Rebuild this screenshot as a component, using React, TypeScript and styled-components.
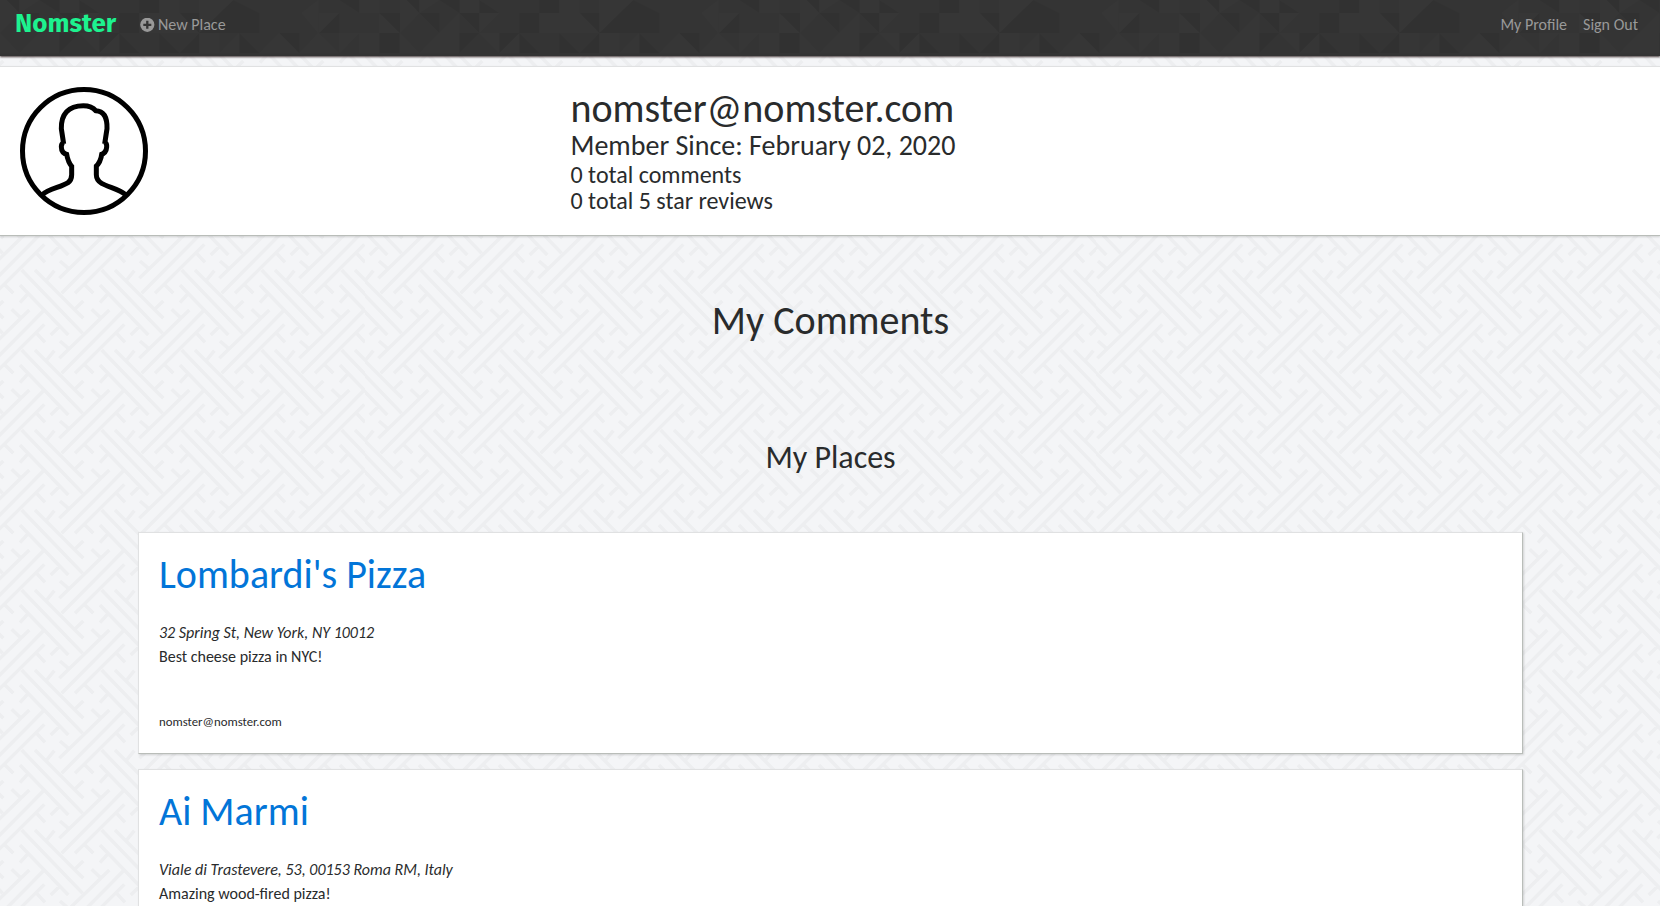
import React from 'react';
import styled, { createGlobalStyle } from 'styled-components';

const svgUrl = (svg: string) => `url("data:image/svg+xml,${encodeURIComponent(svg)}")`;

/* Interlocking diagonal strokes, one 240-unit tile repeated with its neighbours. */
const tileStrokes = [
  'M60 135L205 285M65 90L248 280M105 90L250 235',
  'M85 160L60 188M180 258L152 285M140 120L163 92M225 207L250 183',
  'M178 115L328 -30M185 160L370 -27M225 160L373 13',
  'M205 85L180 63M300 -8L275 -32M350 40L375 67M255 135L280 160',
].join('');

const shifts = [-240, 0, 240];
const pageTile = svgUrl(
  `<svg xmlns="http://www.w3.org/2000/svg" width="80" height="80" viewBox="0 0 240 240"><g fill="none" stroke="#edeef0" stroke-width="10.5">${shifts
    .flatMap((x) => shifts.map((y) => `<path transform="translate(${x} ${y})" d="${tileStrokes}"/>`))
    .join('')}</g></svg>`,
);

const lightFacets =
  'M0 0H20L58 39H0ZM58 39V0H118ZM180 0H238V39H180ZM118 99L178 39V99ZM0 39H58L0 99ZM238 39L298 39L238 99ZM0 99L58 160H0ZM58 160L118 99V160ZM118 99H178V160H118ZM238 99H298V160ZM298 160L358 99V160ZM478 0H538V39H478ZM598 0H700L598 99ZM418 39H538L598 99H418ZM598 99H658V160H598ZM658 160L718 99V160ZM778 160L838 99L898 160ZM905 39L955 0V99ZM958 39H1018L958 99ZM898 160L955 99L1018 160ZM1018 99H1078L1018 160ZM1078 99H1138V160H1078ZM1078 0H1138V39H1078ZM1138 39L1198 99H1138Z';
const darkFacets =
  'M20 0H58V39ZM118 0H178V39ZM238 0L298 39H238ZM58 39H118V99ZM178 39H238V99ZM358 39H418V99H358ZM178 99H238L178 160ZM298 99H358L298 160ZM418 0H478V39H418ZM540 39H598V99ZM700 0L778 39V99H598ZM478 99L538 160H478ZM538 160L598 99V160ZM718 99L778 160H718ZM838 99H898V160ZM1018 39V99H958ZM1018 0H1078V39ZM1138 99H1198V160H1138ZM1138 39H1200V99ZM358 99L418 160H358Z';
const navTile = svgUrl(
  `<svg xmlns="http://www.w3.org/2000/svg" width="400" height="56" viewBox="0 0 1200 168"><rect width="1200" height="168" fill="#343434"/><path fill="#363636" d="${lightFacets}"/><path fill="#313131" d="${darkFacets}"/></svg>`,
);

const GlobalStyle = createGlobalStyle`
  *, *::before, *::after { box-sizing: border-box; }
  html { height: 100%; overflow: hidden; }
  body {
    margin: 0;
    height: 906px;
    overflow: hidden;
    font-family: Calibri, Carlito, Lato, sans-serif;
    font-size: 16px;
    line-height: 1.5;
    color: #292b2c;
    background: #f4f5f7 ${pageTile} 0 0 / 79.9px 80px;
  }
  h1, h2, h3, h4, p { margin: 0; font-weight: 400; }
  h1, h2, h3, h4 { line-height: 1.1; }
  a { color: inherit; text-decoration: none; }
`;

const Navbar = styled.nav`
  display: flex;
  align-items: flex-start;
  height: 56px;
  padding: 0 22px 0 15px;
  background: #343434 ${navTile} 0 0 repeat-x;
  box-shadow: 0 1px 2px rgba(40, 25, 25, 0.85);
`;

const Brand = styled.a`
  width: 102px;
  margin-right: 23px;
  padding-top: 8px;
  font: 700 26px/31px 'Fira Sans', 'Open Sans', sans-serif;
  color: #1df28f;
`;

const NavLink = styled.a`
  display: inline-flex;
  align-items: center;
  gap: 3px;
  padding-top: 13px;
  line-height: 24px;
  color: #999;
`;

const NavEnd = styled.div`
  display: flex;
  gap: 16px;
  margin-left: auto;
`;

const Profile = styled.section`
  display: grid;
  grid-template-columns: 550.5px 1fr;
  height: 170px;
  margin-top: 10px;
  padding: 20px;
  background: #fff;
  border: solid;
  border-width: 1px 0;
  border-color: #e0e1e2 transparent #b9bdb9;
  box-shadow: 0 1px 2px rgba(0, 0, 0, 0.15);
`;

const Avatar = styled.svg`
  display: block;
  width: 128px;
  height: 128px;
  fill: none;
  stroke: #000;
  stroke-width: 15;
`;

const Heading = styled.h1<{ $size: number }>`
  font-size: ${(p) => p.$size}px;
`;

const SectionTitle = styled(Heading)<{ $top: number }>`
  padding: ${(p) => p.$top}px 0 0 1px;
  text-align: center;
`;

const Places = styled.div`
  display: flex;
  flex-direction: column;
  gap: 15px;
  padding: 57px 137px 0 138px;
`;

const Card = styled.article`
  height: 222px;
  padding: 20px;
  background: #fff;
  border: 1px solid;
  border-color: #e0e1e2 #b9bdb9 #b9bdb9 #e0e1e2;
  box-shadow: 1px 1px 2px rgba(0, 0, 0, 0.15);
`;

const PlaceName = styled.h1`
  margin-bottom: 24px;
  font-size: 40px;
  color: #0275d8;
`;

const Address = styled.p`
  font-style: italic;
`;

const Author = styled.p`
  margin-top: 40px;
  small { font-size: 80%; }
`;

const places = [
  { name: "Lombardi's Pizza", address: '32 Spring St, New York, NY 10012', text: 'Best cheese pizza in NYC!' },
  { name: 'Ai Marmi', address: 'Viale di Trastevere, 53, 00153 Roma RM, Italy', text: 'Amazing wood-fired pizza!' },
];

const PlusCircle = () => (
  <svg width="15" height="15" viewBox="0 0 15 15">
    <circle cx="7.3" cy="6.8" r="7.1" fill="#999" />
    <path d="M7.3 2.8v8M3.3 6.8h8" stroke="#353535" strokeWidth="2.3" />
  </svg>
);

export default function App() {
  return (
    <>
      <GlobalStyle />
      <Navbar>
        <Brand href="#">Nomster</Brand>
        <NavLink href="#"><PlusCircle />New Place</NavLink>
        <NavEnd>
          <NavLink href="#">My Profile</NavLink>
          <NavLink href="#">Sign Out</NavLink>
        </NavEnd>
      </Navbar>
      <Profile>
        <Avatar viewBox="60 261 384 384">
          <circle cx="252" cy="453" r="184.5" />
          <path d="M126 585C145 566 183 562 204 548Q215 540 215 524V496M217 501C207 492 202 476 199 458M203 464C189 461 184 452 184 440Q184 432 190 428M191 432L184 386C183 342 205 317 250 317Q275 317 287 332C313 333 322 354 321 386L314 432M315 427Q321 431 320 441Q319 459 302 464M306 458C304 474 298 492 286 501M289 496V524Q289 540 305 550C326 562 360 567 378 585" />
        </Avatar>
        <div>
          <Heading $size={40}>nomster@nomster.com</Heading>
          <Heading as="h3" $size={28}>Member Since: February 02, 2020</Heading>
          <Heading as="h4" $size={24}>0 total comments</Heading>
          <Heading as="h4" $size={24}>0 total 5 star reviews</Heading>
        </div>
      </Profile>
      <SectionTitle $size={40} $top={63}>My Comments</SectionTitle>
      <SectionTitle as="h2" $size={32} $top={97}>My Places</SectionTitle>
      <Places>
        {places.map((place) => (
          <Card key={place.name}>
            <PlaceName><a href="#">{place.name}</a></PlaceName>
            <Address>{place.address}</Address>
            <p>{place.text}</p>
            <Author><small>nomster@nomster.com</small></Author>
          </Card>
        ))}
      </Places>
    </>
  );
}
